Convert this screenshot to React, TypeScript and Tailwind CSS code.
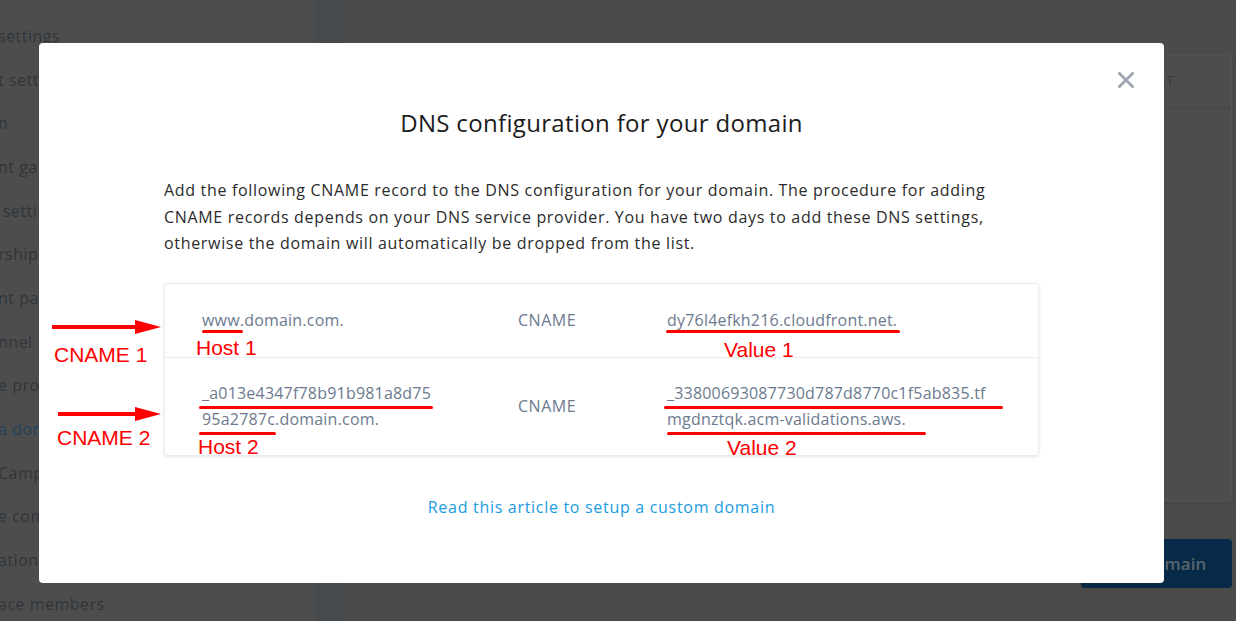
const sidebarItems = [
  { label: "settings", active: false },
  { label: "t sett", active: false },
  { label: "n", active: false },
  { label: "nt gat", active: false },
  { label: " settin", active: false },
  { label: "rship", active: false },
  { label: "nt pag", active: false },
  { label: "nnel", active: false },
  { label: "e prog", active: false },
  { label: "a dom", active: true },
  { label: "Camp", active: false },
  { label: "e com", active: false },
  { label: "ation", active: false },
  { label: "ace members", active: false },
];

const records = [
  {
    host: ["www.domain.com."],
    type: "CNAME",
    value: ["dy76l4efkh216.cloudfront.net."],
    height: "h-[73px]",
  },
  {
    host: ["_a013e4347f78b91b981a8d75", "95a2787c.domain.com."],
    type: "CNAME",
    value: ["_33800693087730d787d8770c1f5ab835.tf", "mgdnztqk.acm-validations.aws."],
    height: "h-[98px]",
  },
];

function Arrow({ x, y, w }: { x: number; y: number; w: number }) {
  return (
    <svg
      className="absolute"
      style={{ left: x, top: y - 8 }}
      width={w}
      height={16}
      viewBox={`0 0 ${w} 16`}
    >
      <rect x={0} y={6} width={w - 22} height={4} fill="#ff0000" />
      <polygon points={`${w - 26},1 ${w},8 ${w - 26},15`} fill="#ff0000" />
    </svg>
  );
}

function Mark({ x, y, w }: { x: number; y: number; w: number }) {
  return (
    <div
      className="absolute h-[3px] rounded-full bg-[#ff0000]"
      style={{ left: x, top: y - 1, width: w }}
    />
  );
}

function Label({ x, y, text }: { x: number; y: number; text: string }) {
  return (
    <div
      className="absolute text-[21px] leading-[24px] text-[#ff0000] whitespace-nowrap"
      style={{ left: x, top: y, fontFamily: '"Liberation Sans", Arial, sans-serif' }}
    >
      {text}
    </div>
  );
}

export default function App() {
  return (
    <div
      className="relative w-[1236px] h-[621px] overflow-hidden bg-[#4d4d4d]"
      style={{ fontFamily: '"Open Sans", sans-serif' }}
    >
      {/* page behind the modal, dimmed */}
      <div className="flex h-full">
        <aside className="w-[315px] shrink-0 pt-[14px] overflow-hidden">
          {sidebarItems.map((item) => (
            <div
              key={item.label}
              className={`h-[43.7px] ml-[-2px] flex items-center text-[16px] tracking-[0.5px] whitespace-pre ${
                item.active ? "text-[#1f4260]" : "text-[#30353a]"
              }`}
            >
              {item.label}
            </div>
          ))}
        </aside>
        <div className="w-[30px] shrink-0 bg-[#474a4d]" />
        <main className="flex-1 flex flex-col bg-[#4b4b4b] pt-[54px] pr-[4px] pl-[20px]">
          <div className="h-[448px] rounded-[4px] border border-[#545454] bg-[#4d4d4d] shadow-[0_1px_2px_rgba(0,0,0,0.15)]">
            <div className="h-[53px] flex items-center justify-end pr-[57px] border-b border-[#464646] text-[13px] tracking-wide text-[#3a3a3a]">
              DEFAULT
            </div>
          </div>
          <button className="self-end mt-[37px] w-[151px] h-[49px] rounded-[4px] bg-[#062a47] text-[17px] font-semibold text-[#5b646c]">
            Add domain
          </button>
        </main>
      </div>

      {/* modal */}
      <div className="absolute inset-0">
        <div className="relative mt-[43px] ml-[39px] w-[1125px] h-[540px] rounded-[4px] bg-white flex flex-col items-center pt-[64px] px-[125px]">
          <button className="absolute top-[29px] right-[30px] w-[16px] h-[16px] text-[#9ba6b0]">
            <svg viewBox="0 0 16 16" width={16} height={16}>
              <path d="M1.5 1.5 L14.5 14.5 M14.5 1.5 L1.5 14.5" stroke="currentColor" strokeWidth={2.8} strokeLinecap="square" />
            </svg>
          </button>
          <h2 className="text-[24px] leading-[32px] tracking-[0.33px] text-[#1c1c1c]">
            DNS configuration for your domain
          </h2>
          <p className="mt-[38px] w-full text-[16px] leading-[26.5px] tracking-[0.68px] text-[#2b2b2b]">
            Add the following CNAME record to the DNS configuration for your domain. The procedure for adding
            <br />
            CNAME records depends on your DNS service provider. You have two days to add these DNS settings,
            <br />
            otherwise the domain will automatically be dropped from the list.
          </p>
          <div className="mt-[26px] w-full rounded-[3px] border border-[#e9ecf0] shadow-[0_1px_3px_rgba(30,50,80,0.12)]">
            {records.map((r, i) => (
              <div
                key={i}
                className={`${r.height} grid grid-cols-[316px_149px_1fr] items-center px-[37px] text-[16px] leading-[26px] tracking-[0.2px] text-[#6b7a8e] ${
                  i > 0 ? "border-t border-[#e9ecf0]" : ""
                }`}
              >
                <div>
                  {r.host.map((l) => (
                    <div key={l}>{l}</div>
                  ))}
                </div>
                <div className="tracking-[0.5px]">{r.type}</div>
                <div>
                  {r.value.map((l) => (
                    <div key={l}>{l}</div>
                  ))}
                </div>
              </div>
            ))}
          </div>
          <a className="mt-[39px] text-[16px] leading-[24px] tracking-[0.7px] text-[#1a9be2] cursor-pointer">
            Read this article to setup a custom domain
          </a>
        </div>

        {/* red annotations drawn over the screenshot */}
        <Arrow x={52} y={327} w={109} />
        <Arrow x={58} y={414} w={103} />
        <Label x={54} y={343} text="CNAME 1" />
        <Label x={57} y={426} text="CNAME 2" />
        <Label x={196} y={336} text="Host 1" />
        <Label x={198} y={435} text="Host 2" />
        <Label x={724} y={338} text="Value 1" />
        <Label x={727} y={436} text="Value 2" />
        <Mark x={202} y={331} w={41} />
        <Mark x={666} y={331} w={234} />
        <Mark x={199} y={407} w={234} />
        <Mark x={199} y={433} w={77} />
        <Mark x={664} y={407} w={339} />
        <Mark x={667} y={433} w={259} />
      </div>
    </div>
  );
}
